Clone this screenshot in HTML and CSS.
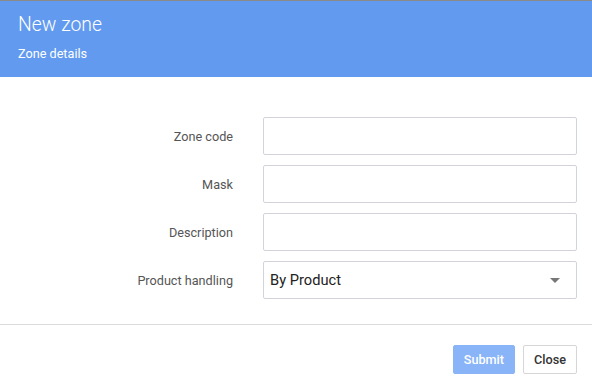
FILE: index.html
```html
<!DOCTYPE html>
<html lang="en">
<head>
  <meta charset="UTF-8">
  <title>New zone</title>
  <link rel="stylesheet" href="styles.css">
</head>
<body>
  <div class="modal">
    <div class="modal-header">
      <h1>New zone</h1>
      <p>Zone details</p>
    </div>

    <form class="modal-body">
      <label for="zoneCode">Zone code</label>
      <input type="text" id="zoneCode">

      <label for="mask">Mask</label>
      <input type="text" id="mask">

      <label for="description">Description</label>
      <input type="text" id="description">

      <label for="handling">Product handling</label>
      <div class="select">
        <span>By Product</span>
        <span class="caret"></span>
      </div>
    </form>

    <div class="modal-footer">
      <button class="btn btn-primary" disabled>Submit</button>
      <button class="btn">Close</button>
    </div>
  </div>
</body>
</html>
```

FILE: styles.css
```css
body {
  margin: 0;
  padding: 0;
  font-family: Roboto, "Liberation Sans", sans-serif;
  background-color: #fff;
}

.modal {
  border-top: 1px solid #8a8a8a;
}

.modal-header {
  background-color: #629af0;
  color: #fff;
  padding: 12px 18px 13px;
  height: 51px;
}

.modal-header h1 {
  margin: 0;
  font-size: 19.4px;
  font-weight: 300;
  line-height: 24px;
}

.modal-header p {
  margin: 9px 0 0;
  font-size: 12.67px;
  line-height: 16px;
}

.modal-body {
  display: grid;
  grid-template-columns: 233px 1fr;
  column-gap: 30px;
  row-gap: 10px;
  align-items: center;
  padding: 40px 15px 25px 0;
  border-bottom: 1px solid #dcdcdc;
}

.modal-body label {
  text-align: right;
  font-size: 12.67px;
  color: #555;
}

.modal-body input,
.select {
  box-sizing: border-box;
  height: 38px;
  width: 100%;
  border: 1px solid #d3d3dc;
  border-radius: 2px;
  background: #fff;
  font-family: inherit;
  font-size: 14.67px;
  padding: 0 6px;
  margin: 0;
}

.select {
  display: flex;
  align-items: center;
  justify-content: space-between;
  color: #222;
  padding-right: 16px;
}

.caret {
  width: 0;
  height: 0;
  border-left: 5px solid transparent;
  border-right: 5px solid transparent;
  border-top: 5px solid #777;
}

.modal-footer {
  display: flex;
  justify-content: flex-end;
  gap: 8px;
  padding: 20px 15px;
}

.btn {
  height: 29px;
  padding: 0 10px;
  font-family: inherit;
  font-size: 12.67px;
  font-weight: 500;
  background-color: #fff;
  color: #333;
  border: 1px solid #d6d6d6;
  border-radius: 2px;
}

.btn-primary {
  background-color: #8ab4f8;
  border-color: #8ab4f8;
  color: #fff;
}
```
